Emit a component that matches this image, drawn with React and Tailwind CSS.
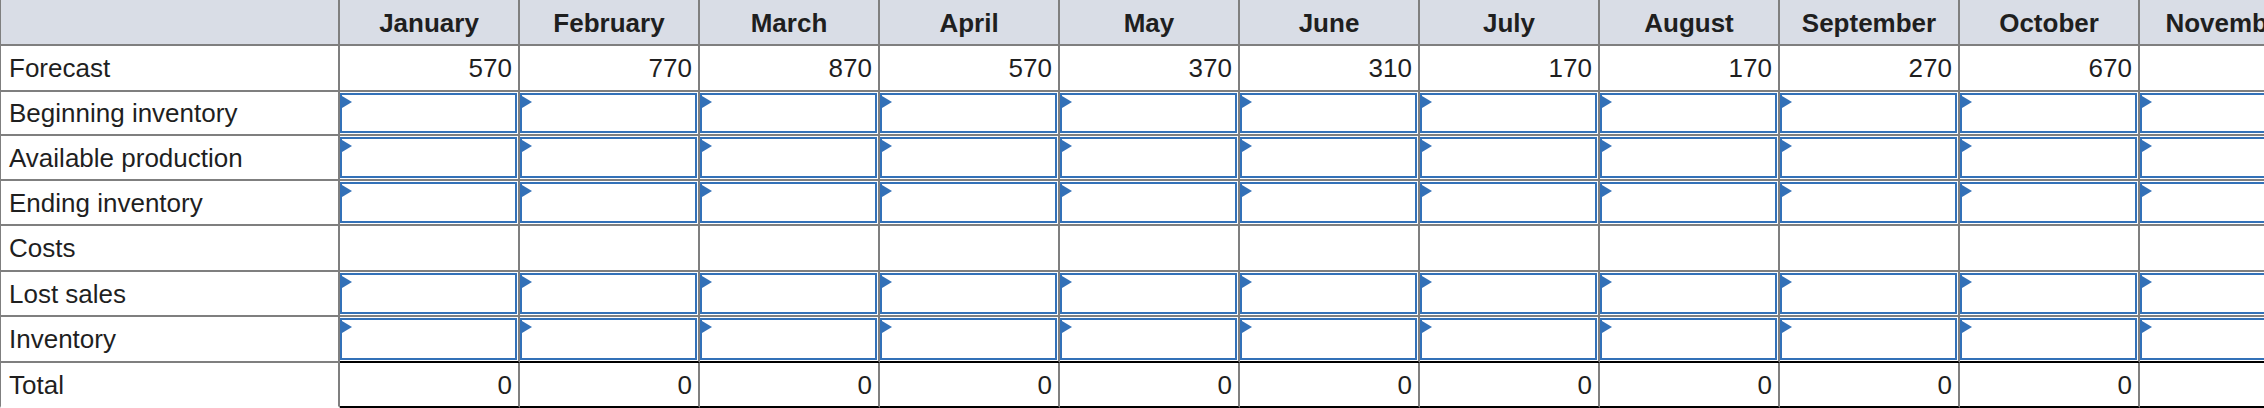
import React from 'react';

const months = ['January', 'February', 'March', 'April', 'May', 'June', 'July', 'August', 'September', 'October', 'November'];
const forecast = [570, 770, 870, 570, 370, 310, 170, 170, 270, 670, ''];

const rows = [
  { label: 'Forecast', kind: 'value', values: forecast, h: 'h-[46px]' },
  { label: 'Beginning inventory', kind: 'input', h: 'h-[44px]' },
  { label: 'Available production', kind: 'input', h: 'h-[45px]' },
  { label: 'Ending inventory', kind: 'input', h: 'h-[45px]' },
  { label: 'Costs', kind: 'empty', h: 'h-[46px]' },
  { label: 'Lost sales', kind: 'input', h: 'h-[45px]' },
  { label: 'Inventory', kind: 'input', h: 'h-[46px]', dark: true },
  { label: 'Total', kind: 'value', values: months.map((m, i) => (i < 10 ? 0 : '')), h: 'h-[45px]', dark: true, last: true },
];

const InputBox = () => (
  <div className="h-full pt-[1px] pb-[1px] pr-[1px]">
    <div className="relative h-full border-2 border-[#3371b8]">
      <svg className="absolute left-0 top-[1px]" width="10" height="12" viewBox="0 0 10 12">
        <polygon points="0,0 10,6 0,12" fill="#3371b8" />
      </svg>
    </div>
  </div>
);

const App = () => {
  return (
    <div className="w-[2264px] h-[408px] overflow-hidden bg-white text-[26px] leading-none text-[#1f1f1f] font-['Liberation_Sans',Arial,sans-serif]">
      {/* header */}
      <div className="flex w-max h-[46px] bg-[#d9dde6]">
        <div className="w-[340px] shrink-0 border-l border-r-2 border-b-2 border-[#7f7f7f]" />
        {months.map((m) => (
          <div key={m} className="w-[180px] shrink-0 flex items-center justify-center pt-[2px] font-bold border-r-2 border-b-2 border-[#7f7f7f]">
            {m}
          </div>
        ))}
      </div>

      {rows.map((row) => (
        <div key={row.label} className={`flex w-max ${row.h}`}>
          <div className={`w-[340px] shrink-0 flex items-center pl-[8px] border-l border-r-2 border-[#7f7f7f] ${row.last ? 'border-b-2 border-b-transparent' : 'border-b-2'}`}>
            {row.label}
          </div>
          {months.map((m, i) => (
            <div key={m} className={`w-[180px] shrink-0 border-r-2 border-b-2 border-[#7f7f7f] ${row.dark ? 'border-b-black' : ''}`}>
              {row.kind === 'input' && <InputBox />}
              {row.kind === 'value' && (
                <div className="h-full flex items-center justify-end pr-[6px]">{row.values[i]}</div>
              )}
            </div>
          ))}
        </div>
      ))}
    </div>
  );
};

export default App;
